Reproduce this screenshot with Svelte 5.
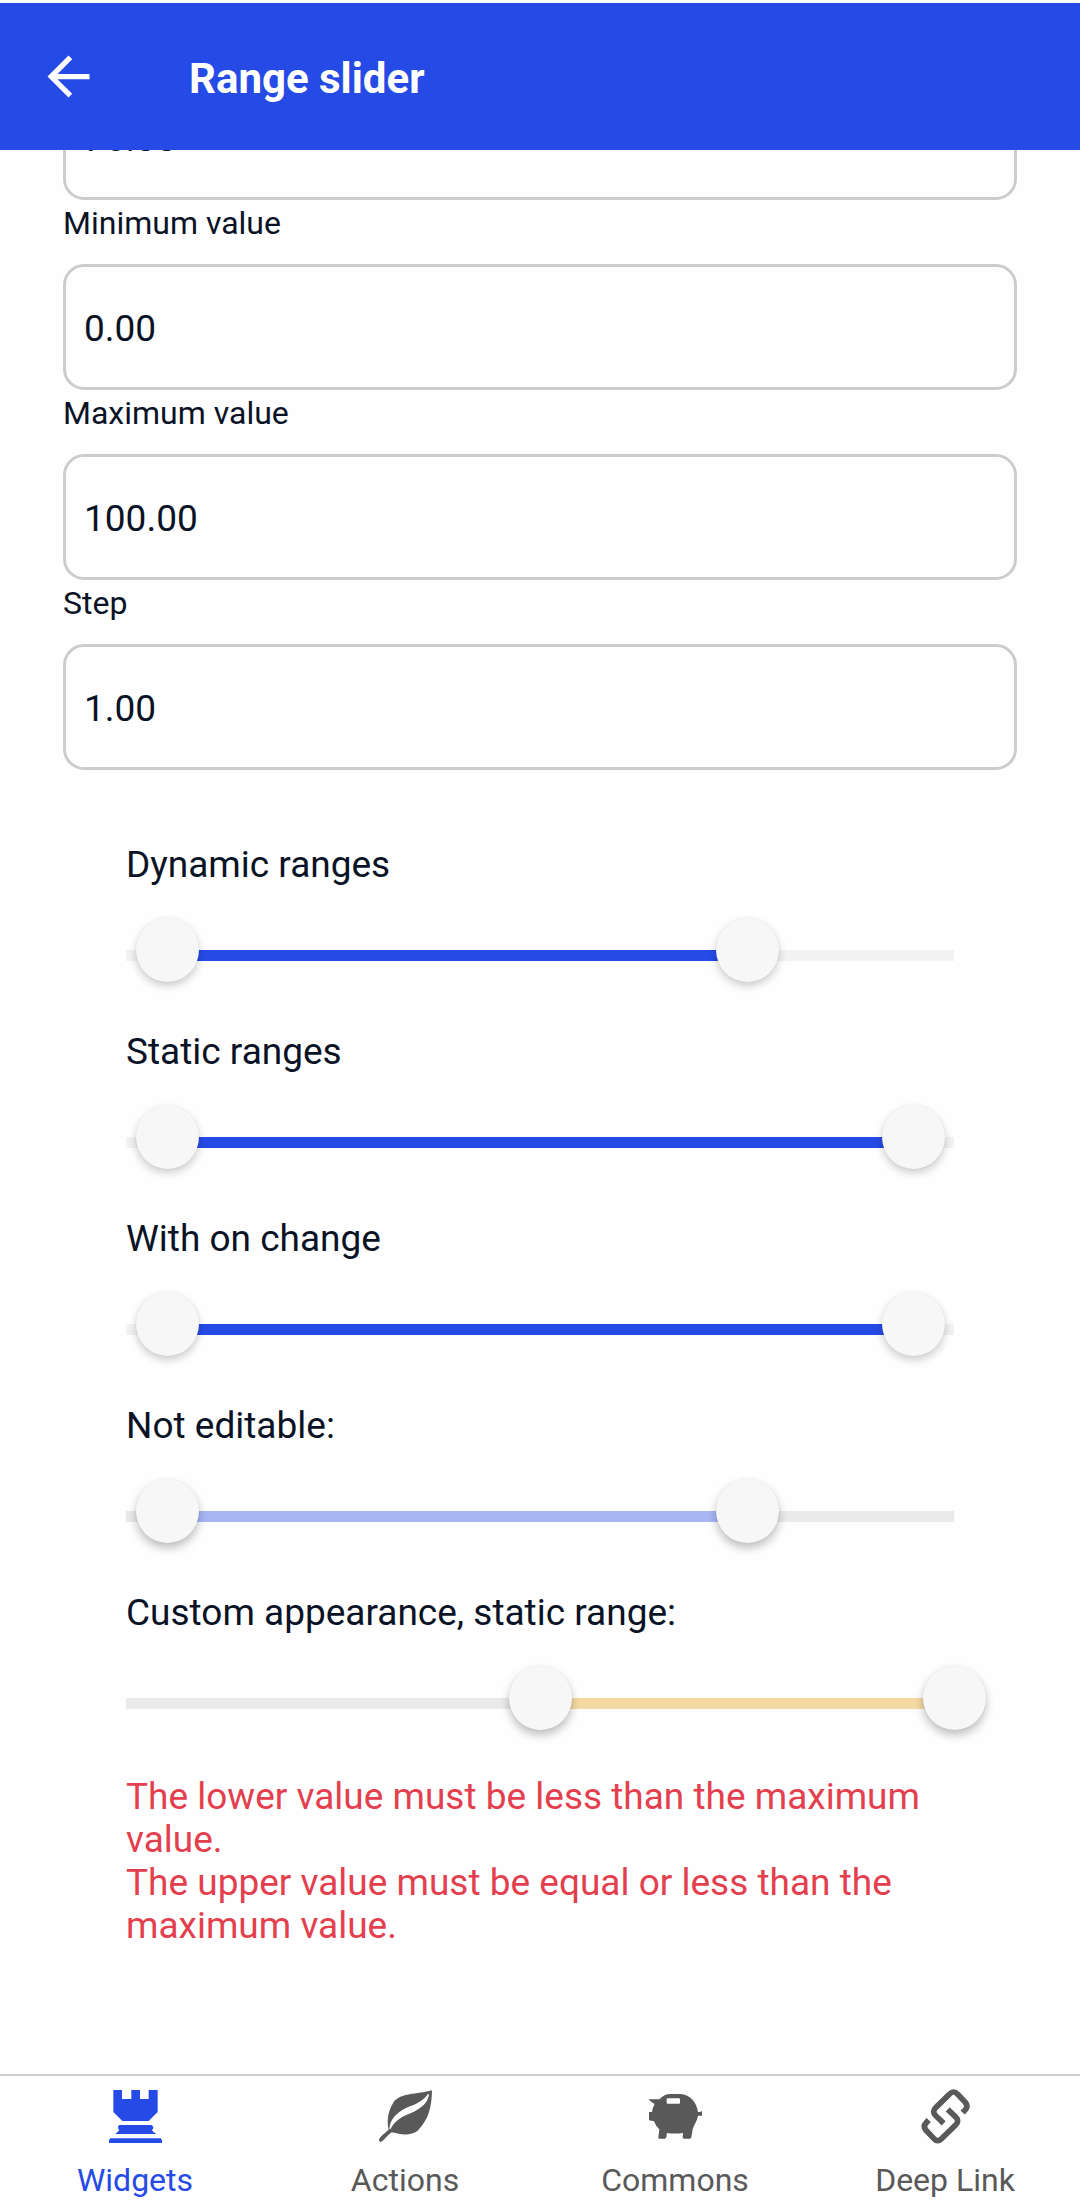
<script>
  let fields = $state([
    { id: 'upper', label: 'Upper value', value: '75.00' },
    { id: 'minimum', label: 'Minimum value', value: '0.00' },
    { id: 'maximum', label: 'Maximum value', value: '100.00' },
    { id: 'step', label: 'Step', value: '1.00' }
  ]);

  let sliders = $state([
    { title: 'Dynamic ranges', low: 5, high: 75, disabled: false, tone: 'primary' },
    { title: 'Static ranges', low: 5, high: 95, disabled: false, tone: 'primary' },
    { title: 'With on change', low: 5, high: 95, disabled: false, tone: 'primary' },
    { title: 'Not editable:', low: 5, high: 75, disabled: true, tone: 'primary' },
    { title: 'Custom appearance, static range:', low: 50, high: 100, disabled: true, tone: 'warning' }
  ]);
</script>

<div class="screen">
  <header>
    <button class="back" aria-label="Back">
      <svg viewBox="0 0 24 24" aria-hidden="true">
        <path d="M20 11H7.83l5.59-5.59L12 4l-8 8 8 8 1.41-1.41L7.83 13H20v-2z" />
      </svg>
    </button>
    <h1>Range slider</h1>
  </header>

  <main>
    <form class="fields">
      {#each fields as field, i}
        <div class="field">
          {#if i > 0}
            <label for={field.id}>{field.label}</label>
          {/if}
          <input id={field.id} type="text" inputmode="decimal" aria-label={field.label} bind:value={field.value} />
        </div>
      {/each}
    </form>

    <div class="sliders">
      {#each sliders as s, i}
        <section class="group" role="group" aria-labelledby="slider-{i}">
          <h2 id="slider-{i}">{s.title}</h2>
          <div class="slider {s.tone}" class:disabled={s.disabled}>
            <div class="track">
              <div class="fill" style="margin-left: {s.low}%; width: {s.high - s.low}%"></div>
            </div>
            <input type="range" min="0" max="100" aria-label="Lower value" disabled={s.disabled} bind:value={s.low} />
            <input type="range" min="0" max="100" aria-label="Upper value" disabled={s.disabled} bind:value={s.high} />
          </div>
        </section>
      {/each}
    </div>

    <div class="errors" role="alert">
      <p>The lower value must be less than the maximum value.</p>
      <p>The upper value must be equal or less than the maximum value.</p>
    </div>
  </main>

  <nav>
    <a href="#widgets" class="active" aria-current="page">
      <svg viewBox="0 0 159 159" aria-hidden="true">
        <path d="M13 0H39V27H67V0H93V27H119V0H146V66L119 93H40L13 66Z" />
        <path d="M31 105H128Q133 108 133 113Q132 119 128 120Q134 128 142 132H18Q26 128 31 120Q27 118 27 112Q28 106 31 105Z" />
        <path d="M4 145H155Q159 148 159 152V159H0V152Q0 148 4 145Z" />
      </svg>
      <span>Widgets</span>
    </a>
    <a href="#actions">
      <svg viewBox="0 0 159 159" aria-hidden="true">
        <path
          fill-rule="evenodd"
          d="M159 1C158 50 150 88 116 122C96 137 70 135 38 127C26 135 18 148 6 156Q0 158 0 148C8 134 20 128 29 119C24 98 24 68 44 36C66 8 112 14 159 1ZM147 12C136 28 118 40 93 49C60 62 33 84 31 117L34 118C42 100 60 84 84 74C120 60 146 42 150 14Q149 11 147 12Z"
        />
      </svg>
      <span>Actions</span>
    </a>
    <a href="#commons">
      <svg viewBox="0 0 159 159" aria-hidden="true">
        <path
          fill-rule="evenodd"
          d="M0 28H31Q46 12 64 12H94C124 13 144 40 147 66H153Q156 66 156 64H159V77H147C145 92 134 106 131 118L127 142Q126 146 122 146H105Q101 146 101 142L102 129Q78 132 54 129L52 142Q51 146 47 146H31Q27 146 28 142L31 118Q20 108 15 94L0 91V66H9Q10 54 17 42Q10 38 0 30ZM56 25Q53 25 53 28V38Q53 41 56 41H90Q93 41 93 38V28Q93 25 90 25Z"
        />
      </svg>
      <span>Commons</span>
    </a>
    <a href="#deep-link">
      <svg viewBox="207 90 159 159" aria-hidden="true">
        <g fill="none" stroke="currentColor" stroke-width="17">
          <path d="M338 158L346 149Q356 139 346 127L323 103Q311 89 298 103L258 142Q244 155 258 168L281 190" />
          <path d="M236 180L228 189Q218 199 228 211L251 235Q263 249 276 235L316 196Q330 183 316 170L293 148" />
        </g>
      </svg>
      <span>Deep Link</span>
    </a>
  </nav>
</div>

<style>
  :global(body) {
    background: #fefefe;
  }

  .screen {
    display: flex;
    flex-direction: column;
    box-sizing: border-box;
    min-height: 100vh;
    padding-top: 3px;
    color: #0a1326;
    font-family: Roboto, 'Liberation Sans', sans-serif;
    font-size: 37px;
    line-height: 43px;
  }

  header {
    display: flex;
    align-items: center;
    gap: 89px;
    padding: 42px 37px;
    background: #264ae5;
    color: #fff;
  }

  .back {
    display: block;
    padding: 0;
    border: 0;
    background: none;
    color: inherit;
  }

  .back svg {
    display: block;
    width: 63px;
    height: 63px;
    fill: currentColor;
  }

  h1 {
    margin: 0;
    padding-top: 4px;
    font-size: 42px;
    line-height: 50px;
    font-weight: 700;
  }

  main {
    flex: 1;
    overflow: hidden;
  }

  .fields {
    margin: -76px 63px 0;
  }

  .field {
    display: flex;
    flex-direction: column;
  }

  label {
    padding: 4px 0 22px;
    font-size: 32px;
    line-height: 38px;
  }

  .field input {
    box-sizing: border-box;
    width: 100%;
    height: 126px;
    padding: 3px 18px 0;
    border: 3px solid #cdcdcd;
    border-radius: 21px;
    background: transparent;
    color: inherit;
    font: inherit;
    outline: 0;
  }

  .sliders {
    display: flex;
    flex-direction: column;
    gap: 48px;
    margin: 73px 126px 45px;
  }

  .group {
    display: flex;
    flex-direction: column;
    gap: 32px;
  }

  h2 {
    margin: 0;
    font-size: 37px;
    line-height: 43px;
    font-weight: 400;
  }

  .slider {
    --rail: #f2f2f2;
    --fill: #264ae5;
    --shadow: 0 4px 8px rgba(0, 0, 0, 0.2), 0 0 2px rgba(0, 0, 0, 0.06);
    display: grid;
    height: 64px;
  }

  .slider > * {
    grid-area: 1 / 1;
  }

  .slider.disabled {
    --rail: #eaeaea;
    --fill: #a8b6f6;
    --shadow: 0 5px 10px rgba(0, 0, 0, 0.26), 0 0 2px rgba(0, 0, 0, 0.06);
  }

  .slider.warning {
    --fill: #f5d9a3;
  }

  .track {
    height: 11px;
    margin-top: 32px;
    background: var(--rail);
  }

  .fill {
    height: 100%;
    background: var(--fill);
  }

  .slider input {
    appearance: none;
    width: calc(100% + 63px);
    height: 64px;
    margin: 0 -32px 0 -31px;
    background: none;
    pointer-events: none;
  }

  .slider input::-webkit-slider-thumb {
    appearance: none;
    width: 63px;
    height: 64px;
    border-radius: 50%;
    background: #f7f7f7;
    box-shadow: var(--shadow);
    pointer-events: auto;
  }

  .errors {
    margin: 0 126px;
    color: #e33f4e;
  }

  .errors p {
    margin: 0;
  }

  nav {
    display: grid;
    grid-template-columns: repeat(4, 1fr);
    border-top: 2px solid #d0d0d0;
  }

  nav a {
    display: flex;
    flex-direction: column;
    align-items: center;
    gap: 18px;
    padding: 14px 0 2px;
    color: #595959;
    font-size: 32px;
    line-height: 38px;
    text-decoration: none;
  }

  nav a.active {
    color: #264ae5;
  }

  nav svg {
    width: 53px;
    height: 53px;
    overflow: visible;
    fill: currentColor;
  }
</style>
